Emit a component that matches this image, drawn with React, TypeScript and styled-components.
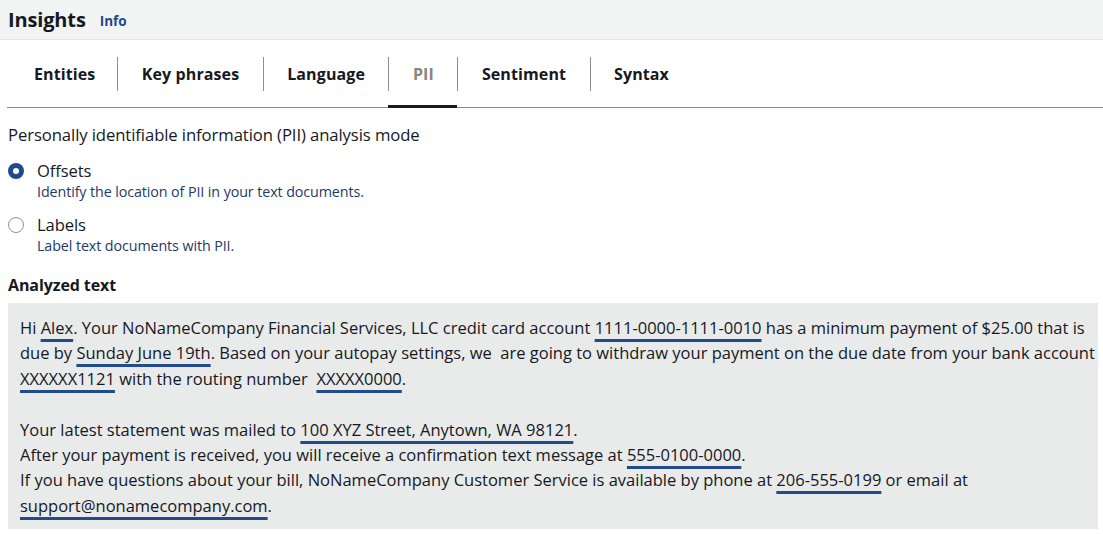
import React from "react";
import styled, { createGlobalStyle } from "styled-components";

const GlobalStyle = createGlobalStyle`
  html, body { margin: 0; padding: 0; background: #ffffff; }
  body { font-family: "Open Sans", "Noto Sans", sans-serif; color: #16191f; }
`;

const Page = styled.div`
  width: 1103px;
  display: flex;
  flex-direction: column;
`;

const Header = styled.header`
  height: 39px;
  background: #f2f3f3;
  border-bottom: 1px solid #e4e6e6;
  display: flex;
  align-items: center;
  gap: 14px;
  padding: 0 8px;
`;

const Title = styled.h2`
  margin: 0;
  font-size: 20px;
  font-weight: 700;
  letter-spacing: -0.15px;
  color: #16191f;
`;

const InfoLink = styled.a`
  font-size: 13.5px;
  font-weight: 700;
  color: #1d4a8c;
  text-decoration: none;
  margin-top: 2px;
`;

const TabList = styled.div`
  display: flex;
  margin-left: 7px;
  border-bottom: 1px solid #8c8c8c;
  height: 67px;
  align-items: flex-end;
`;

const Tab = styled.div<{ $active?: boolean }>`
  padding: 17px 0 14px;
  margin-bottom: -1px;
  border-bottom: 3px solid ${(p) => (p.$active ? "#1b1a22" : "transparent")};
`;

const TabLabel = styled.div<{ $first?: boolean; $active?: boolean }>`
  height: 34px;
  display: flex;
  align-items: center;
  padding: ${(p) => (p.$first ? "0 22px 0 27px" : "0 23.5px")};
  border-left: ${(p) => (p.$first ? "none" : "1px solid #8f8f8f")};
  font-size: 16px;
  line-height: 20px;
  font-weight: 700;
  letter-spacing: 0.1px;
  color: ${(p) => (p.$active ? "#8b8579" : "#16191f")};
`;

const Content = styled.div`
  display: flex;
  flex-direction: column;
  padding: 16px 5px 0 8px;
`;

const ModeHeading = styled.div`
  font-size: 16.7px;
  line-height: 22px;
  letter-spacing: -0.1px;
`;

const RadioGroup = styled.div`
  display: flex;
  flex-direction: column;
  gap: 12px;
  margin-top: 14px;
`;

const RadioOption = styled.label`
  display: grid;
  grid-template-columns: 16px 1fr;
  column-gap: 13px;
  align-items: center;
`;

const RadioCircle = styled.span<{ $checked?: boolean }>`
  width: 16px;
  height: 16px;
  box-sizing: border-box;
  border-radius: 50%;
  ${(p) =>
    p.$checked
      ? `background: #1f4b8c;`
      : `background: #fff; border: 1.5px solid #8d9394;`}
  display: flex;
  align-items: center;
  justify-content: center;
`;

const Dot = styled.span`
  width: 6px;
  height: 6px;
  border-radius: 50%;
  background: #fff;
`;

const RadioLabel = styled.span`
  font-size: 16.6px;
  line-height: 22px;
  letter-spacing: -0.1px;
`;

const RadioDesc = styled.span`
  grid-column: 2;
  font-size: 14.3px;
  line-height: 20px;
  color: #1f3a66;
  letter-spacing: -0.1px;
`;

const SectionTitle = styled.div`
  margin-top: 18px;
  font-size: 16px;
  line-height: 22px;
  font-weight: 700;
  letter-spacing: -0.1px;
`;

const TextBox = styled.div`
  margin-top: 7px;
  background: #e9eaea;
  padding: 12px 2px 11px 12px;
  font-size: 16.5px;
  line-height: 25.4px;
  white-space: pre;
  overflow: hidden;
  color: #16191f;
`;

const Para = styled.p`
  margin: 0;
  & + & {
    margin-top: 25.4px;
  }
`;

const Pii = styled.span`
  text-decoration: underline;
  text-decoration-color: #234a8a;
  text-decoration-thickness: 2.5px;
  text-underline-offset: 4.5px;
`;

const tabs = ["Entities", "Key phrases", "Language", "PII", "Sentiment", "Syntax"];

export default function App() {
  return (
    <>
      <GlobalStyle />
      <Page>
        <Header>
          <Title>Insights</Title>
          <InfoLink href="#">Info</InfoLink>
        </Header>
        <TabList>
          {tabs.map((t, i) => (
            <Tab key={t} $active={t === "PII"}>
              <TabLabel $first={i === 0} $active={t === "PII"}>
                {t}
              </TabLabel>
            </Tab>
          ))}
        </TabList>
        <Content>
          <ModeHeading>Personally identifiable information (PII) analysis mode</ModeHeading>
          <RadioGroup>
            <RadioOption>
              <RadioCircle $checked>
                <Dot />
              </RadioCircle>
              <RadioLabel>Offsets</RadioLabel>
              <RadioDesc>Identify the location of PII in your text documents.</RadioDesc>
            </RadioOption>
            <RadioOption>
              <RadioCircle />
              <RadioLabel>Labels</RadioLabel>
              <RadioDesc>Label text documents with PII.</RadioDesc>
            </RadioOption>
          </RadioGroup>
          <SectionTitle>Analyzed text</SectionTitle>
          <TextBox>
            <Para>
              {"Hi "}
              <Pii>Alex</Pii>
              {". Your NoNameCompany Financial Services, LLC credit card account "}
              <Pii>1111-0000-1111-0010</Pii>
              {" has a minimum payment of $25.00 that is\ndue by "}
              <Pii>Sunday June 19th</Pii>
              {". Based on your autopay settings, we  are going to withdraw your payment on the due date from your bank account\n"}
              <Pii>XXXXXX1121</Pii>
              {" with the routing number  "}
              <Pii>XXXXX0000</Pii>
              {"."}
            </Para>
            <Para>
              {"Your latest statement was mailed to "}
              <Pii>100 XYZ Street, Anytown, WA 98121</Pii>
              {".\nAfter your payment is received, you will receive a confirmation text message at "}
              <Pii>555-0100-0000</Pii>
              {".\nIf you have questions about your bill, NoNameCompany Customer Service is available by phone at "}
              <Pii>206-555-0199</Pii>
              {" or email at\n"}
              <Pii>support@nonamecompany.com</Pii>
              {"."}
            </Para>
          </TextBox>
        </Content>
      </Page>
    </>
  );
}
